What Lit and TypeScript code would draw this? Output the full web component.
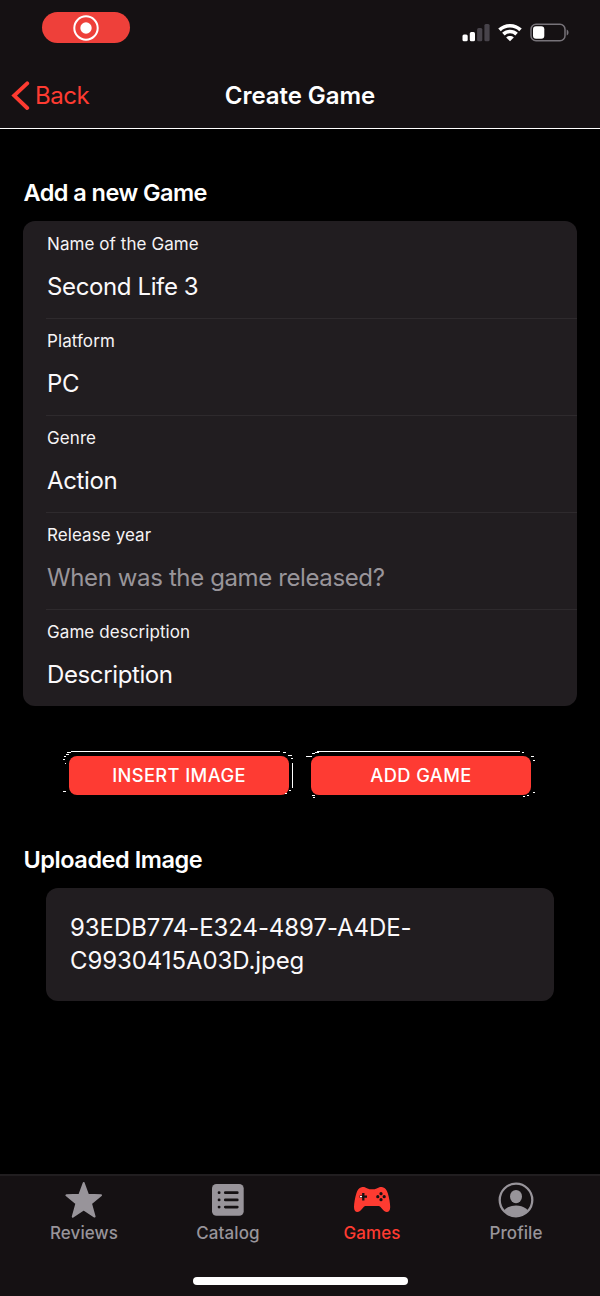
import { LitElement, html, css, svg } from "lit";
import { customElement } from "lit/decorators.js";
import { classMap } from "lit/directives/class-map.js";

interface Field {
  label: string;
  value: string;
  placeholder?: boolean;
}

const FIELDS: Field[] = [
  { label: "Name of the Game", value: "Second Life 3" },
  { label: "Platform", value: "PC" },
  { label: "Genre", value: "Action" },
  { label: "Release year", value: "When was the game released?", placeholder: true },
  { label: "Game description", value: "Description" },
];

const star = svg`<path d="M19.700 3 L24 14.800 L37 15.300 L27 23.400 L30.600 36.600 L19.700 29.400 L8.800 36.600 L12.400 23.400 L2.400 15.300 L15.400 14.800 Z" fill="currentColor" stroke="currentColor" stroke-width="2" stroke-linejoin="round"/>`;

const list = svg`
  <rect x="4" y="4" width="31.700" height="31.700" rx="4.500" fill="currentColor"/>
  <g stroke="#151113" stroke-width="2.700" stroke-linecap="round">
    <path d="M17.300 12.700H29.300M17.300 19.900H29.300M17.300 27.100H29.300M11 12.700h.2M11 19.900h.2M11 27.100h.2"/>
  </g>`;

const pad = svg`
  <path d="M9.500 7.200c2.100-.7 4 .1 6 1.300 1.100.6 1.700.7 2.600.7h4c.9 0 1.500-.1 2.600-.7 2-1.200 3.900-2 6-1.300 2.700.8 4 2.600 5.100 6.100 1.400 4.500 2.400 10 2.400 13.700 0 3.400-1.300 5.100-3.400 5.100-1.700 0-2.800-.9-4.100-2.500l-2.200-2.600c-.7-.8-1.300-1.100-2.400-1.100H14.100c-1.100 0-1.700.3-2.400 1.100l-2.200 2.600c-1.300 1.600-2.400 2.500-4.100 2.500-2.100 0-3.400-1.700-3.400-5.100 0-3.700 1-9.200 2.400-13.700 1.100-3.500 2.400-5.300 5.100-6.100Z" fill="currentColor"/>
  <path d="M11.300 13v7.400M7.600 16.700h7.400" stroke="#151113" stroke-width="2.300"/>
  <path d="M8 16.700h2" stroke="#fff" stroke-width="1.200"/>
  <g fill="#151113"><circle cx="29" cy="13.700" r="1.600"/><circle cx="29" cy="19.700" r="1.600"/><circle cx="25.800" cy="16.700" r="1.600"/><circle cx="32.200" cy="16.700" r="1.600"/></g>`;

const person = svg`
  <clipPath id="disc"><circle cx="20" cy="20" r="16"/></clipPath>
  <circle cx="20" cy="20" r="16.300" fill="none" stroke="currentColor" stroke-width="2.300"/>
  <ellipse cx="20" cy="16.600" rx="6" ry="6.700" fill="currentColor"/>
  <ellipse cx="20" cy="35.400" rx="14" ry="9.900" fill="currentColor" clip-path="url(#disc)"/>`;

const TABS = [
  { name: "Reviews", icon: star, active: false },
  { name: "Catalog", icon: list, active: false },
  { name: "Games", icon: pad, active: true },
  { name: "Profile", icon: person, active: false },
];

@customElement("app-root")
export class AppRoot extends LitElement {
  static styles = css`
    :host {
      display: flex;
      flex-direction: column;
      box-sizing: border-box;
      height: 1296px;
      background: #000;
      color: #fff;
      font-family: Inter, "Liberation Sans", sans-serif;
      overflow: hidden;
    }
    * { box-sizing: border-box; }
    svg { display: block; }
    .top {
      height: 129px;
      background: #151113;
      border-bottom: 1px solid #fff;
      display: flex;
      flex-direction: column;
    }
    .status {
      height: 64px;
      display: flex;
      justify-content: space-between;
      padding: 12px 30px 0 42px;
    }
    .record {
      width: 88px;
      height: 31px;
      border-radius: 16px;
      background: #ee403a;
      display: grid;
      place-items: center;
    }
    .signals { display: flex; gap: 8px; padding-top: 11px; }
    .nav {
      height: 64px;
      display: grid;
      grid-template-columns: 180px 240px 180px;
      align-items: center;
      line-height: 30px;
    }
    .back {
      display: flex;
      align-items: center;
      gap: 5px;
      padding-left: 11px;
      color: #fe3b31;
      font-size: 24px;
      letter-spacing: -0.5px;
    }
    .title {
      text-align: center;
      font-size: 24px;
      line-height: 32px;
      font-weight: 600;
      letter-spacing: -0.05px;
    }
    .content { flex: 1; }
    .heading {
      font-size: 23.5px;
      line-height: 30px;
      font-weight: 600;
      letter-spacing: -0.55px;
      padding-left: 23.500px;
    }
    .first { margin-top: 49px; }
    .second { margin-top: 50px; letter-spacing: -0.45px; }
    .card { margin: 13px 23px 0; background: #211d20; border-radius: 12px; padding-left: 23px; }
    .row { height: 97px; padding: 11px 0 0 1px; border-top: 1px solid #2e2a2d; }
    .row:first-child { border-color: transparent; }
    .label { font-size: 17px; line-height: 22px; letter-spacing: 0.08px; color: #f5f3f5; }
    .value { font-size: 24px; line-height: 30px; margin-top: 17px; letter-spacing: -0.38px; color: #fbf9fb; }
    .placeholder { color: #99959a; }
    .actions { display: flex; gap: 22px; margin: 50px 69px 0; position: relative; }
    .button {
      flex: 1;
      height: 39px;
      border-radius: 8px;
      background: #fe3b33;
      color: #fff;
      text-align: center;
      font: 500 18.3px/39px Inter, "Liberation Sans", sans-serif;
      letter-spacing: 0.4px;
    }
    .fringe { position: absolute; left: -6px; top: -6px; }
    .file {
      margin: 13px 46px 0;
      height: 113px;
      padding: 23px 24px 0;
      border-radius: 12px;
      background: #211d20;
      font-size: 24px;
      line-height: 33px;
      letter-spacing: -0.08px;
      color: #fbf9fb;
    }
    .tabs {
      height: 122px;
      border-top: 2px solid #211e20;
      background: #151113;
      display: flex;
      flex-direction: column;
      align-items: center;
      justify-content: space-between;
      padding-bottom: 11px;
    }
    .bar { display: grid; grid-template-columns: repeat(4, 144px); padding-top: 4px; }
    .tab {
      display: flex;
      flex-direction: column;
      align-items: center;
      color: #98949a;
      font-size: 17px;
      line-height: 22px;
      font-weight: 500;
      letter-spacing: 0.1px;
    }
    .active { color: #fe3b31; }
    .tab-text { margin-top: 2px; }
    .home { width: 215px; height: 8px; border-radius: 4px; background: #fff; }
  `;

  render() {
    return html`
      <header class="top">
        <div class="status">
          <div class="record">
            <svg width="26" height="26" viewBox="0 0 26 26">
              <circle cx="13" cy="13" r="11.700" fill="none" stroke="#fff" stroke-width="2"/>
              <circle cx="13" cy="13" r="5.700" fill="#fff"/>
            </svg>
          </div>
          <div class="signals">
            <svg width="28" height="20" viewBox="0 0 28 20">
              <rect x="0.500" y="11.500" width="5.200" height="6.800" rx="1.500" fill="#fff"/>
              <rect x="7.800" y="9" width="5.200" height="9.300" rx="1.500" fill="#fff"/>
              <rect x="15.100" y="5" width="5.200" height="13.300" rx="1.500" fill="#47434a"/>
              <rect x="22.400" y="1" width="5.200" height="17.300" rx="1.500" fill="#47434a"/>
            </svg>
            <svg width="24" height="20" viewBox="0 0 24 20">
              <g fill="none" stroke="#fff" stroke-width="3.600">
                <path d="M1.500 6.900C7.300 1.300 16.700 1.300 22.500 6.900"/>
                <path d="M5.400 11.100C9 7.600 15 7.600 18.600 11.100"/>
              </g>
              <path d="M12 18.300L8.200 14.500C10.300 12.600 13.700 12.600 15.800 14.500Z" fill="#fff"/>
            </svg>
            <svg width="40" height="20" viewBox="0 0 40 20">
              <rect x="1" y="1.200" width="34" height="16.600" rx="5" fill="none" stroke="#777379" stroke-width="1.500"/>
              <rect x="3" y="3.200" width="11.300" height="12.600" rx="3" fill="#fff"/>
              <path d="M36.700 6.500C39.100 7.500 39.100 11.500 36.700 12.500Z" fill="#777379"/>
            </svg>
          </div>
        </div>
        <div class="nav">
          <div class="back">
            <svg width="19" height="30" viewBox="0 0 19 30">
              <path d="M16.200 2.400L3.200 14.600L16.200 27" fill="none" stroke="currentColor" stroke-width="3.900" stroke-linecap="round" stroke-linejoin="miter"/>
            </svg>
            <span>Back</span>
          </div>
          <div class="title">Create Game</div>
        </div>
      </header>
      <main class="content">
        <div class="heading first">Add a new Game</div>
        <div class="card">
          ${FIELDS.map(
            (f) => html`<div class="row">
              <div class="label">${f.label}</div>
              <div class=${classMap({ value: true, placeholder: !!f.placeholder })}>${f.value}</div>
            </div>`
          )}
        </div>
        <div class="actions">
          <div class="button">INSERT IMAGE</div>
          <div class="button">ADD GAME</div>
          <svg class="fringe" width="476" height="50" viewBox="0 0 476 50" shape-rendering="crispEdges">
            <path d="M8 1.500H217M254 1.500H457M229.500 13V38M4 2.500H8M3 4.500H6M1 6.500H3M0 9.500H2M2 13.500H3M0 41.500H3M220 2.500H223M225 5.500H229M228 8.500H230M226 40.500H228M222 43.500H224M243 6.500H249M249 3.500H252M252 2.500H256M459 2.500H461M468 6.500H471M470 10.500H472M470 42.500H472M460 46.500H462M464 45.500H466M249 45.500H252M250 47.500H252" fill="none" stroke="#fff" stroke-width="1"/>
          </svg>
        </div>
        <div class="heading second">Uploaded Image</div>
        <div class="file">93EDB774-E324-4897-A4DE-<br />C9930415A03D.jpeg</div>
      </main>
      <footer class="tabs">
        <div class="bar">
          ${TABS.map(
            (t) => html`<div class=${classMap({ tab: true, active: t.active })}>
              <svg width="40" height="40" viewBox="0 0 40 40">${t.icon}</svg>
              <span class="tab-text">${t.name}</span>
            </div>`
          )}
        </div>
        <div class="home"></div>
      </footer>
    `;
  }
}
